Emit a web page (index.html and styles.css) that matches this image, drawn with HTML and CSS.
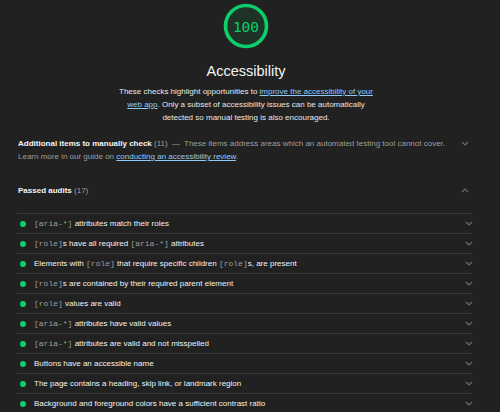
FILE: index.html
```html
<!DOCTYPE html>
<html lang="en">
<head>
<meta charset="utf-8">
<title>Accessibility</title>
<link rel="stylesheet" href="styles.css">
</head>
<body>
<div class="report">
  <header class="cat-header">
    <div class="gauge">
      <svg class="gauge-svg" viewBox="0 0 46 46" width="46" height="46" aria-hidden="true">
        <circle cx="23" cy="23" r="20.5" fill="rgba(12,206,107,0.1)" stroke="#0cce6b" stroke-width="3.6"/>
      </svg>
      <span class="gauge-value">100</span>
    </div>
    <h1 class="cat-title">Accessibility</h1>
    <p class="cat-desc">
      <span class="desc-line">These checks highlight opportunities to <a href="#">improve the accessibility of your</a></span>
      <span class="desc-line"><a href="#">web app</a>. Only a subset of accessibility issues can be automatically</span>
      <span class="desc-line">detected so manual testing is also encouraged.</span>
    </p>
  </header>

  <section class="group manual">
    <div class="group-head">
      <div class="group-text">
        <div class="line"><span class="group-title">Additional items to manually check</span> <span class="count">(11)</span> <span class="dash">—</span> <span class="muted">These items address areas which an automated testing tool cannot cover.</span></div>
        <div class="line muted">Learn more in our guide on <a href="#">conducting an accessibility review</a>.</div>
      </div>
      <svg class="chev chev-head" viewBox="0 0 8 5" width="8" height="5"><path d="M1 1l3 3 3-3" fill="none" stroke="currentColor" stroke-width="1.1"/></svg>
    </div>
  </section>

  <section class="group passed">
    <div class="group-head">
      <div class="group-text"><span class="group-title">Passed audits</span> <span class="count">(17)</span></div>
      <svg class="chev chev-head" viewBox="0 0 8 5" width="8" height="5"><path d="M1 4l3-3 3 3" fill="none" stroke="currentColor" stroke-width="1.1"/></svg>
    </div>
    <ul class="audits">
      <li class="audit"><span class="dot"></span><span class="audit-title"><code>[aria-*]</code> attributes match their roles</span><svg class="chev" viewBox="0 0 8 5" width="8" height="5"><path d="M1 1l3 3 3-3" fill="none" stroke="currentColor" stroke-width="1.1"/></svg></li>
      <li class="audit"><span class="dot"></span><span class="audit-title"><code>[role]</code>s have all required <code>[aria-*]</code> attributes</span><svg class="chev" viewBox="0 0 8 5" width="8" height="5"><path d="M1 1l3 3 3-3" fill="none" stroke="currentColor" stroke-width="1.1"/></svg></li>
      <li class="audit"><span class="dot"></span><span class="audit-title">Elements with <code>[role]</code> that require specific children <code>[role]</code>s, are present</span><svg class="chev" viewBox="0 0 8 5" width="8" height="5"><path d="M1 1l3 3 3-3" fill="none" stroke="currentColor" stroke-width="1.1"/></svg></li>
      <li class="audit"><span class="dot"></span><span class="audit-title"><code>[role]</code>s are contained by their required parent element</span><svg class="chev" viewBox="0 0 8 5" width="8" height="5"><path d="M1 1l3 3 3-3" fill="none" stroke="currentColor" stroke-width="1.1"/></svg></li>
      <li class="audit"><span class="dot"></span><span class="audit-title"><code>[role]</code> values are valid</span><svg class="chev" viewBox="0 0 8 5" width="8" height="5"><path d="M1 1l3 3 3-3" fill="none" stroke="currentColor" stroke-width="1.1"/></svg></li>
      <li class="audit"><span class="dot"></span><span class="audit-title"><code>[aria-*]</code> attributes have valid values</span><svg class="chev" viewBox="0 0 8 5" width="8" height="5"><path d="M1 1l3 3 3-3" fill="none" stroke="currentColor" stroke-width="1.1"/></svg></li>
      <li class="audit"><span class="dot"></span><span class="audit-title"><code>[aria-*]</code> attributes are valid and not misspelled</span><svg class="chev" viewBox="0 0 8 5" width="8" height="5"><path d="M1 1l3 3 3-3" fill="none" stroke="currentColor" stroke-width="1.1"/></svg></li>
      <li class="audit"><span class="dot"></span><span class="audit-title">Buttons have an accessible name</span><svg class="chev" viewBox="0 0 8 5" width="8" height="5"><path d="M1 1l3 3 3-3" fill="none" stroke="currentColor" stroke-width="1.1"/></svg></li>
      <li class="audit"><span class="dot"></span><span class="audit-title">The page contains a heading, skip link, or landmark region</span><svg class="chev" viewBox="0 0 8 5" width="8" height="5"><path d="M1 1l3 3 3-3" fill="none" stroke="currentColor" stroke-width="1.1"/></svg></li>
      <li class="audit"><span class="dot"></span><span class="audit-title">Background and foreground colors have a sufficient contrast ratio</span><svg class="chev" viewBox="0 0 8 5" width="8" height="5"><path d="M1 1l3 3 3-3" fill="none" stroke="currentColor" stroke-width="1.1"/></svg></li>
    </ul>
  </section>
</div>
</body>
</html>
```

FILE: styles.css
```css
html, body {
  margin: 0;
  padding: 0;
  background: #212121;
  height: 100%;
  overflow: hidden;
}
body {
  font-family: "Liberation Sans", Arial, Helvetica, sans-serif;
  color: #eeeeee;
  font-size: 8px;
}
.report {
  padding: 0 28px 0 17px;
}
.cat-header {
  display: flex;
  flex-direction: column;
  align-items: center;
  padding: 3px 0 0 3px;
}
.gauge {
  position: relative;
  width: 46px;
  height: 46px;
}
.gauge-svg {
  display: block;
}
.gauge-value {
  position: absolute;
  inset: 0;
  display: flex;
  align-items: center;
  justify-content: center;
  font-family: "DejaVu Sans Mono", "Liberation Mono", monospace;
  font-size: 14.5px;
  color: #0cce6b;
  padding-top: 1px;
}
.cat-title {
  margin: 13px 0 0;
  font-size: 14.5px;
  line-height: 18px;
  font-weight: normal;
  color: #f5f5f5;
}
.cat-desc {
  margin: 5px 0 0;
  text-align: center;
  line-height: 13px;
  color: #e8e8e8;
}
.desc-line {
  display: block;
  white-space: nowrap;
}
a {
  color: #90caf9;
  text-decoration: underline;
}
.group-head {
  display: flex;
  align-items: flex-start;
  justify-content: space-between;
  padding-left: 1px;
}
.group-text {
  line-height: 13px;
  flex: 1;
}
.line {
  white-space: nowrap;
}
.group-title {
  font-weight: bold;
  color: #f5f5f5;
}
.count, .dash, .muted {
  color: #9e9e9e;
}
.dash {
  margin: 0 2px;
}
.muted a {
  color: #90caf9;
}
.manual {
  margin-top: 13px;
}
.passed {
  margin-top: 21px;
}
.chev {
  color: #6f6f6f;
  flex: none;
}
.chev-head {
  margin: 4px 3px 0 0;
}
.audits {
  list-style: none;
  margin: 16px 0 0;
  padding: 0;
}
.audit {
  display: flex;
  align-items: center;
  height: 19px;
  border-top: 1px solid #3a3a3a;
  padding-left: 3px;
}
.dot {
  width: 6px;
  height: 6px;
  border-radius: 50%;
  background: #0cce6b;
  margin-right: 8px;
  flex: none;
}
.audit-title {
  flex: 1;
  white-space: nowrap;
  color: #f2f2f2;
}
code {
  font-family: "Liberation Mono", "DejaVu Sans Mono", monospace;
  font-size: 8px;
  color: #9e9e9e;
}
.audit .chev {
  margin-right: -1px;
}
```
